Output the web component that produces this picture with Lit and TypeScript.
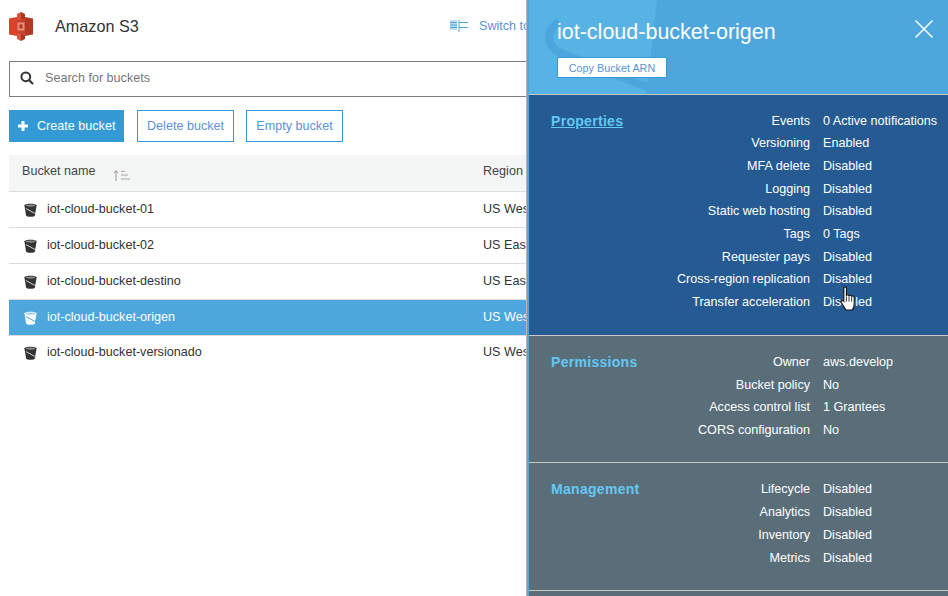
import { LitElement, html, css } from "lit";
import { customElement } from "lit/decorators.js";

const bucket = (fg: string, mark: string) => html`<svg class="bk" width="15" height="16" viewBox="0 0 16 16">
  <path d="M1.500 3C1.500 .6 14.500 .6 14.500 3L12.800 13.500C12.400 15.800 3.600 15.800 3.200 13.500Z" fill="${fg}"/>
  <ellipse cx="8" cy="3.200" rx="5.200" ry="1.200" fill="${mark}" opacity=".5"/>
  <path d="M3.200 6.500L12 11.300C13.800 12.300 14.800 10.800 13 10.200" fill="none" stroke="${mark}" stroke-width="1"/>
</svg>`;

const rows = [
  ["iot-cloud-bucket-01", "US West"],
  ["iot-cloud-bucket-02", "US East"],
  ["iot-cloud-bucket-destino", "US East"],
  ["iot-cloud-bucket-origen", "US West"],
  ["iot-cloud-bucket-versionado", "US West"],
];

const sections = [
  {
    name: "Properties", cls: "props",
    items: [["Events", "0 Active notifications"], ["Versioning", "Enabled"], ["MFA delete", "Disabled"], ["Logging", "Disabled"], ["Static web hosting", "Disabled"], ["Tags", "0 Tags"], ["Requester pays", "Disabled"], ["Cross-region replication", "Disabled"], ["Transfer acceleration", "Disabled"]],
  },
  {
    name: "Permissions", cls: "perm",
    items: [["Owner", "aws.develop"], ["Bucket policy", "No"], ["Access control list", "1 Grantees"], ["CORS configuration", "No"]],
  },
  {
    name: "Management", cls: "mgmt",
    items: [["Lifecycle", "Disabled"], ["Analytics", "Disabled"], ["Inventory", "Disabled"], ["Metrics", "Disabled"]],
  },
];

@customElement("app-root")
export class AppRoot extends LitElement {
  static styles = css`
    :host { display: block; position: relative; width: 948px; height: 596px; overflow: hidden; background: #fff; font-family: "Liberation Sans", Arial, sans-serif; font-size: 12.600px; color: #333; }
    .main { width: 948px; padding-left: 9px; box-sizing: border-box; }
    .top { height: 61px; display: flex; align-items: flex-start; }
    .logo { margin-top: 12px; width: 24px; height: 29px; flex: none; }
    .title { margin: 16px 0 0 22px; font-size: 16.200px; line-height: 20px; color: #333; width: 395px; }
    .switch { display: flex; align-items: center; gap: 11px; margin-top: 17px; color: #5b92d4; line-height: 18px; white-space: nowrap; }
    .search { height: 31px; padding-bottom: 3px; border: 1px solid #7d7d7d; display: flex; align-items: center; color: #777; }
    .search svg { margin: 0 11px 0 10px; }
    .btns { display: flex; gap: 12px; margin-top: 13px; height: 32px; }
    .btn { border: 1px solid #339ad6; color: #5b92d4; display: flex; align-items: center; box-sizing: border-box; height: 32px; padding-bottom: 1px; white-space: nowrap; }
    .btn.a { background: #339ad6; color: #fff; border: 0; padding-left: 8px; gap: 8px; width: 115px; }
    .btn.a svg { margin-top: 1px; }
    .btn.d { width: 97px; justify-content: center; margin-left: 1px; }
    .btn.e { width: 97px; justify-content: center; }
    .table { margin-top: 13px; }
    .thead { height: 37px; background: #f4f5f5; border-bottom: 1px solid #dcdcdc; display: flex; box-sizing: border-box; }
    .th1 { width: 474px; padding-left: 13px; display: flex; align-items: flex-start; padding-top: 9px; box-sizing: border-box; line-height: 15px; color: #444; }
    .th1 svg { margin: 5px 0 0 17px; }
    .th2 { padding-top: 9px; line-height: 15px; color: #444; }
    .row { height: 36px; border-bottom: 1px solid #dcdcdc; display: flex; align-items: center; color: #333; box-sizing: border-box; }
    .row:last-child { border-bottom-color: transparent; margin-top: -1px; }
    .row.sel { background: #4da6dc; color: #fff; }
    .row span, .row .r { position: relative; top: -1px; }
    .c1 { width: 474px; display: flex; align-items: center; padding-left: 14px; box-sizing: border-box; gap: 9px; }
    .bk { flex: none; }

    .panel { position: absolute; left: 526px; top: 0; bottom: 0; width: 422px; box-sizing: border-box; border-left: 1px solid #b5b5b5; overflow: hidden; }
    .inner { border-left: 2px solid #4da6dc; height: 100%; box-sizing: border-box; background: #5a6e7a; }
    .phead { position: relative; height: 95px; background: #4da6dc; color: #fff; padding: 20px 0 0 28px; box-sizing: border-box; border-bottom: 1px solid #c8c8c8; overflow: hidden; }
    .wm { position: absolute; left: 0; top: 0; }
    .ptitle { position: relative; font-size: 21.500px; line-height: 24px; }
    .copy { position: relative; display: flex; align-items: center; justify-content: center; margin-top: 13px; width: 108px; height: 19px; background: #fff; border: 1px solid #339ad6; color: #5b92d4; font-size: 10.800px; }
    .close { position: absolute; right: 14px; top: 19px; }
    .sec { display: flex; box-sizing: border-box; border-bottom: 1px solid #c8c8c8; color: #fff; padding-left: 22px; }
    .props { height: 241px; background: #255a93; padding-top: 14.500px; }
    .perm { height: 127px; background: #5a6e7a; padding-top: 15px; }
    .mgmt { height: 128px; background: #5a6e7a; padding-top: 15px; }
    .name { width: 100px; color: #64c8f2; font-weight: 700; font-size: 14px; letter-spacing: .3px; line-height: 23px; flex: none; }
    .props .name { text-decoration: underline; margin-top: .500px; }
    .list { display: grid; grid-template-columns: 159px auto; column-gap: 13px; grid-auto-rows: 22.700px; line-height: 22.700px; }
    .mgmt .list { grid-auto-rows: 23px; line-height: 23px; }
    .k { text-align: right; white-space: nowrap; }
    .v { white-space: nowrap; }
    .hand { position: absolute; left: 840px; top: 286px; }
  `;

  render() {
    return html`
      <div class="main">
        <div class="top">
          <svg class="logo" viewBox="0 0 24 29">
            <path d="M0 6.500L8 5V24L0 22.500Z" fill="#d9432b"/>
            <path d="M24 6.500L16 5V24L24 22.500Z" fill="#b03a22"/>
            <path d="M8 6L12 7.500L16 6V23L12 21.500L8 23Z" fill="#c9412a"/>
            <path d="M8 2L12 0L12 8L8 6.500Z" fill="#e0503a"/>
            <path d="M12 0L16 2V6.500L12 8Z" fill="#a93820"/>
            <path d="M8 23L12 21L12 29L8 27Z" fill="#e0503a"/>
            <path d="M12 21L16 23V27L12 29Z" fill="#a93820"/>
            <path d="M8.500 10.500H15.500V18.500H8.500Z" fill="#e58f7c"/>
            <path d="M10.500 12.500H13.500V16.500H10.500Z" fill="#a93820"/>
          </svg>
          <div class="title">Amazon S3</div>
          <div class="switch">
            <svg width="18" height="12" viewBox="0 0 18 12">
              <rect x="0" y="0" width="7" height="10" fill="#bcdcf2"/>
              <path d="M0 2.500H7M0 5H7M0 7.500H7M9 0V12M9 2.500H18M9 7.500H18" stroke="#4da6dc" stroke-width="1" fill="none"/>
            </svg>
            <span>Switch to</span>
          </div>
        </div>
        <div class="search">
          <svg width="14" height="14" viewBox="0 0 14 14"><circle cx="5.800" cy="5.800" r="4.400" fill="none" stroke="#333" stroke-width="2"/><path d="M9 9L13 13" stroke="#333" stroke-width="2.200"/></svg>
          <span>Search for buckets</span>
        </div>
        <div class="btns">
          <div class="btn a">
            <svg width="12" height="12" viewBox="0 0 12 12"><path d="M6 1V11M1 6H11" stroke="#fff" stroke-width="3"/></svg>
            <span>Create bucket</span>
          </div>
          <div class="btn d">Delete bucket</div>
          <div class="btn e">Empty bucket</div>
        </div>
        <div class="table">
          <div class="thead">
            <div class="th1">
              <span>Bucket name</span>
              <svg width="18" height="12" viewBox="0 0 18 12">
                <path d="M3 12V2M1 4L3 1.500L5 4" stroke="#9a9a9a" fill="none"/>
                <path d="M8 2.500H12M8 6H15M8 10H17" stroke="#a8a8a8" stroke-width="1.200"/>
              </svg>
            </div>
            <div class="th2">Region</div>
          </div>
          ${rows.map(([n, r]) => {
            const sel = n.endsWith("origen");
            return html`<div class="row ${sel ? "sel" : ""}">
              <div class="c1">${bucket(sel ? "#f4f9fc" : "#333", sel ? "#4da6dc" : "#ddd")}<span>${n}</span></div>
              <div class="r">${r}</div>
            </div>`;
          })}
        </div>
      </div>
      <div class="panel">
        <div class="inner">
          <div class="phead">
            <svg class="wm" width="419" height="95" viewBox="0 0 419 95">
              <path d="M0 0H128L117 95H0Z" fill="#57b3e4"/>
              <path d="M30 22C16 30 18 46 30 52L110 84C136 92 142 96 144 100" fill="none" stroke="#4aa6dc" stroke-width="8"/>
            </svg>
            <div class="ptitle">iot-cloud-bucket-origen</div>
            <div class="copy">Copy Bucket ARN</div>
            <svg class="close" width="20" height="20" viewBox="0 0 20 20"><path d="M1.500 1.500L18.500 18.500M18.500 1.500L1.500 18.500" stroke="#fff" stroke-width="1.500" fill="none"/></svg>
          </div>
          ${sections.map((s) => html`<div class="sec ${s.cls}">
            <div class="name">${s.name}</div>
            <div class="list">
              ${s.items.map(([k, v]) => html`<div class="k">${k}</div><div class="v">${v}</div>`)}
            </div>
          </div>`)}
        </div>
      </div>
      <svg class="hand" width="17" height="25" viewBox="0 0 16 24">
        <path d="M3.500 2C3.500 .5 6 .5 6 2V9.500C6 8 8.500 8 8.500 9.800C8.500 8.500 11 8.500 11 10.300C11 9.300 13.500 9.300 13.500 11V17C13.500 20 12.500 22 11.500 23H5.500C4.500 21 2.500 18.500 1 15.500C.3 14 2 13 3.500 14.800Z" fill="#fff" stroke="#111" stroke-width="1.100"/>
        <path d="M6 10V15M8.500 10V15M11 10.500V15" stroke="#111" stroke-width=".8"/>
      </svg>
    `;
  }
}
